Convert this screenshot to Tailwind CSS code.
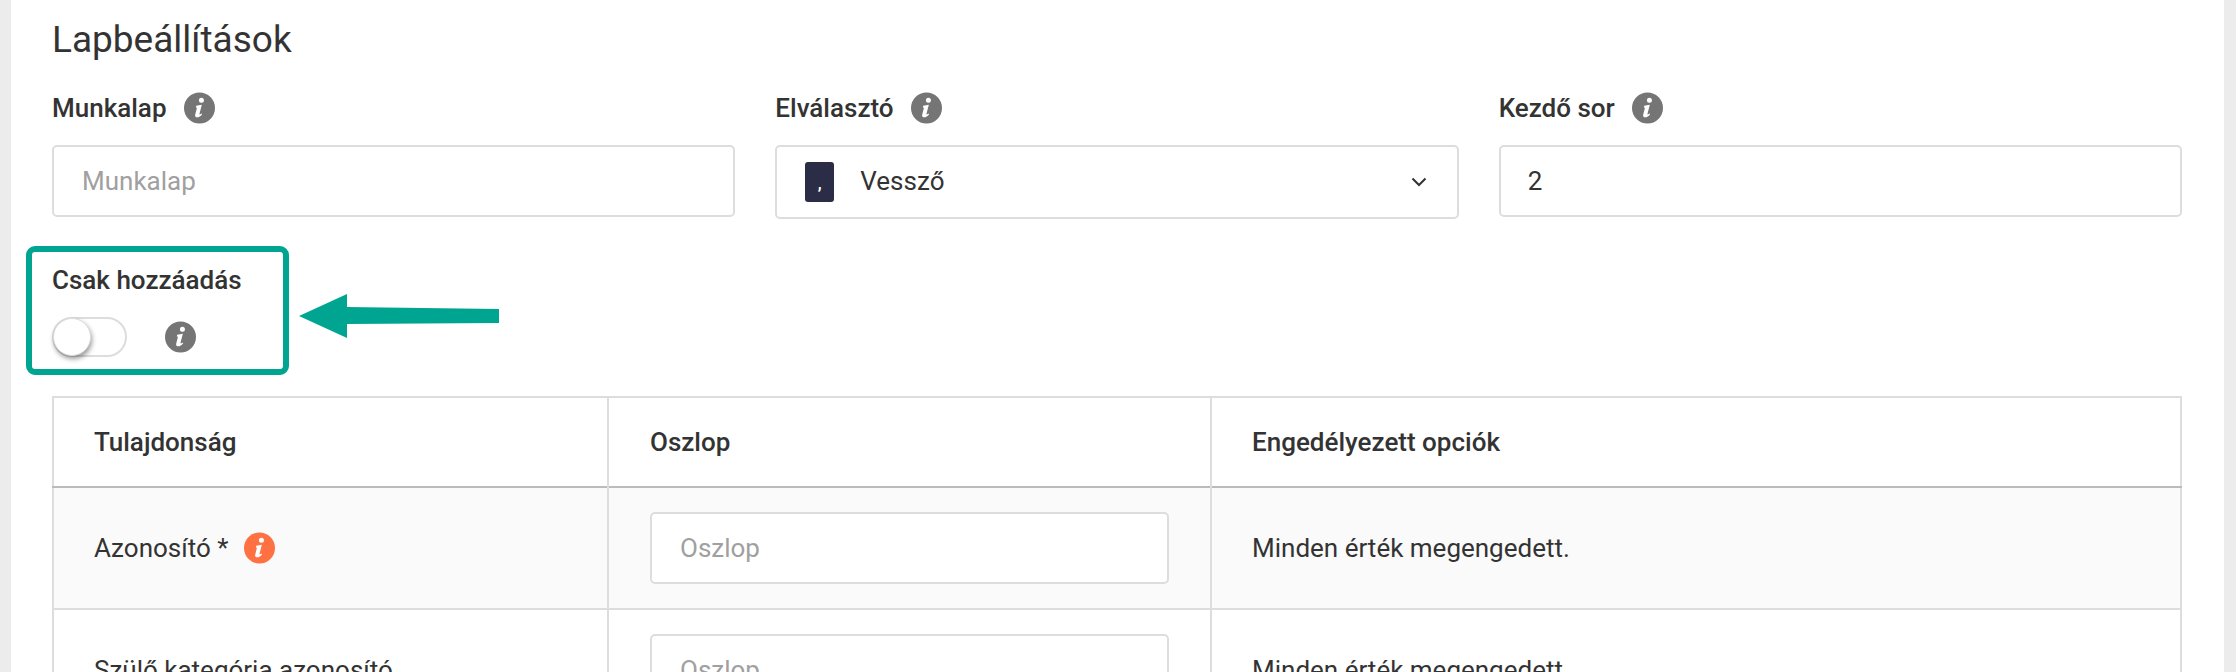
<!DOCTYPE html>
<html lang="hu">
  <head>
    <meta charset="UTF-8" />
    <title>Lapbeállítások</title>
    <script src="https://cdn.jsdelivr.net/npm/@tailwindcss/browser@4"></script>
  </head>
  <body class="bg-[#ececec] h-[672px] overflow-hidden font-['Roboto',sans-serif] text-[#333]">
    <div class="ml-[11px] mr-[12px] h-[672px] bg-white pl-[41px] pr-[42px] pt-[19px] overflow-hidden">
      <h2 class="text-[37px] leading-[42px] h-[42px]">Lapbeállítások</h2>

      <!-- Sheet settings -->
      <div class="grid grid-cols-3 gap-x-[40px] mt-[31px]">
        <div>
          <div class="flex items-center gap-[17px] h-[32px] text-[26px] font-medium">
            Munkalap
            <svg class="w-[31px] h-[32px]" viewBox="0 0 32 32"><circle cx="16" cy="16" r="16" fill="#757575" /><path fill="#fff" d="M18 5.5a2.6 2.6 0 1 1-.01 5.2A2.6 2.6 0 0 1 18 5.5zM12.6 13.6l5.8-.9-2.4 9.3c-.2.9.5 1 1.9-.4l.8.8c-1.6 2.2-3.3 3.2-5 3.2-1.9 0-2.6-1.2-2.1-3l1.6-6.2c.2-.9-.2-1-1-.9z" /></svg>
          </div>
          <input class="block w-full h-[72px] mt-[21px] px-[28px] border-2 border-[#ddd] rounded-[5px] text-[26px] placeholder:text-[#a0a0a0] outline-none" placeholder="Munkalap" />
        </div>
        <div>
          <div class="flex items-center gap-[17px] h-[32px] text-[26px] font-medium">
            Elválasztó
            <svg class="w-[31px] h-[32px]" viewBox="0 0 32 32"><circle cx="16" cy="16" r="16" fill="#757575" /><path fill="#fff" d="M18 5.5a2.6 2.6 0 1 1-.01 5.2A2.6 2.6 0 0 1 18 5.5zM12.6 13.6l5.8-.9-2.4 9.3c-.2.9.5 1 1.9-.4l.8.8c-1.6 2.2-3.3 3.2-5 3.2-1.9 0-2.6-1.2-2.1-3l1.6-6.2c.2-.9-.2-1-1-.9z" /></svg>
          </div>
          <div class="flex items-center h-[74px] mt-[21px] pl-[28px] pr-[30px] border-2 border-[#ddd] rounded-[5px] text-[26px]">
            <span class="w-[29px] h-[40px] bg-[#2a2d45] rounded-[3px] text-white text-[16px] font-bold leading-[44px] text-center">,</span>
            <span class="ml-[26px] flex-1 -mt-[2px]">Vessző</span>
            <svg class="w-[16px] h-[10px]" viewBox="0 0 16 10" fill="none" stroke="#333" stroke-width="2"><path d="M1.5 1.5 8 8l6.5-6.500" /></svg>
          </div>
        </div>
        <div>
          <div class="flex items-center gap-[17px] h-[32px] text-[26px] font-medium">
            Kezdő sor
            <svg class="w-[31px] h-[32px]" viewBox="0 0 32 32"><circle cx="16" cy="16" r="16" fill="#757575" /><path fill="#fff" d="M18 5.5a2.6 2.6 0 1 1-.01 5.2A2.6 2.6 0 0 1 18 5.5zM12.6 13.6l5.8-.9-2.4 9.3c-.2.9.5 1 1.9-.4l.8.8c-1.6 2.2-3.3 3.2-5 3.2-1.9 0-2.6-1.2-2.1-3l1.6-6.2c.2-.9-.2-1-1-.9z" /></svg>
          </div>
          <input class="block w-full h-[72px] mt-[21px] px-[27px] border-2 border-[#ddd] rounded-[5px] text-[26px] outline-none" value="2" />
        </div>
      </div>

      <!-- Highlighted toggle -->
      <div class="relative mt-[27px] -ml-[26px] w-[263px] h-[129px] border-[6px] border-[#00a591] rounded-[9px] pl-[20px] pt-[14px]">
        <div class="text-[26px] font-medium leading-[28px]">Csak hozzáadás</div>
        <div class="flex items-center mt-[23px]">
          <span class="block w-[75px] h-[40px] border-2 border-[#ddd] rounded-full">
            <span class="block -ml-[1px] -mt-[1px] w-[38px] h-[38px] bg-white border border-[#ddd] rounded-full shadow-[1px_3px_5px_rgba(0,0,0,0.4)]"></span>
          </span>
          <svg class="ml-[38px] w-[31px] h-[32px]" viewBox="0 0 32 32"><circle cx="16" cy="16" r="16" fill="#757575" /><path fill="#fff" d="M18 5.5a2.6 2.6 0 1 1-.01 5.2A2.6 2.6 0 0 1 18 5.5zM12.6 13.6l5.8-.9-2.4 9.3c-.2.9.5 1 1.9-.4l.8.8c-1.600 2.200-3.300 3.200-5 3.200-1.900 0-2.600-1.200-2.100-3l1.600-6.200c.2-.9-.2-1-1-.9z" /></svg>
        </div>
        <svg class="absolute left-[267px] top-[42px] w-[200px] h-[44px]" viewBox="0 0 200 44"><path fill="#00a591" d="M0 22 48 0v13l152 2v14l-152 1v14z" /></svg>
      </div>

      <!-- Mapping table -->
      <table class="table-fixed w-full mt-[21px] border-collapse border-2 border-[#ddd] text-[26px]">
        <colgroup>
          <col class="w-[555px]" />
          <col class="w-[603px]" />
          <col />
        </colgroup>
        <thead>
          <tr class="h-[90px] font-medium text-left border-b-2 border-b-[#bbb]">
            <th class="font-medium pl-[40px] border-r-2 border-[#ddd]">Tulajdonság</th>
            <th class="font-medium pl-[41px] border-r-2 border-[#ddd]">Oszlop</th>
            <th class="font-medium pl-[40px]">Engedélyezett opciók</th>
          </tr>
        </thead>
        <tbody>
          <tr class="h-[122px] bg-[#fafafa] border-b-2 border-[#ddd]">
            <td class="pl-[40px] border-r-2 border-[#ddd]">
              <div class="flex items-center gap-[16px]">
                Azonosító *
                <svg class="w-[31px] h-[32px]" viewBox="0 0 32 32"><circle cx="16" cy="16" r="16" fill="#ff7043" /><path fill="#fff" d="M18 5.5a2.6 2.6 0 1 1-.01 5.2A2.6 2.6 0 0 1 18 5.5zM12.6 13.6l5.8-.9-2.4 9.3c-.2.9.5 1 1.9-.4l.8.8c-1.6 2.2-3.3 3.2-5 3.2-1.9 0-2.6-1.2-2.1-3l1.6-6.200c.2-.9-.2-1-1-.9z" /></svg>
              </div>
            </td>
            <td class="px-[41px] border-r-2 border-[#ddd]">
              <input class="block w-full h-[72px] px-[28px] bg-white border-2 border-[#ddd] rounded-[5px] placeholder:text-[#a0a0a0] outline-none" placeholder="Oszlop" />
            </td>
            <td class="pl-[40px]">Minden érték megengedett.</td>
          </tr>
          <tr class="h-[122px]">
            <td class="pl-[40px] border-r-2 border-[#ddd]">Szülő kategória azonosító</td>
            <td class="px-[41px] border-r-2 border-[#ddd]">
              <input class="block w-full h-[72px] px-[28px] bg-white border-2 border-[#ddd] rounded-[5px] placeholder:text-[#a0a0a0] outline-none" placeholder="Oszlop" />
            </td>
            <td class="pl-[40px]">Minden érték megengedett.</td>
          </tr>
        </tbody>
      </table>
    </div>
  </body>
</html>
